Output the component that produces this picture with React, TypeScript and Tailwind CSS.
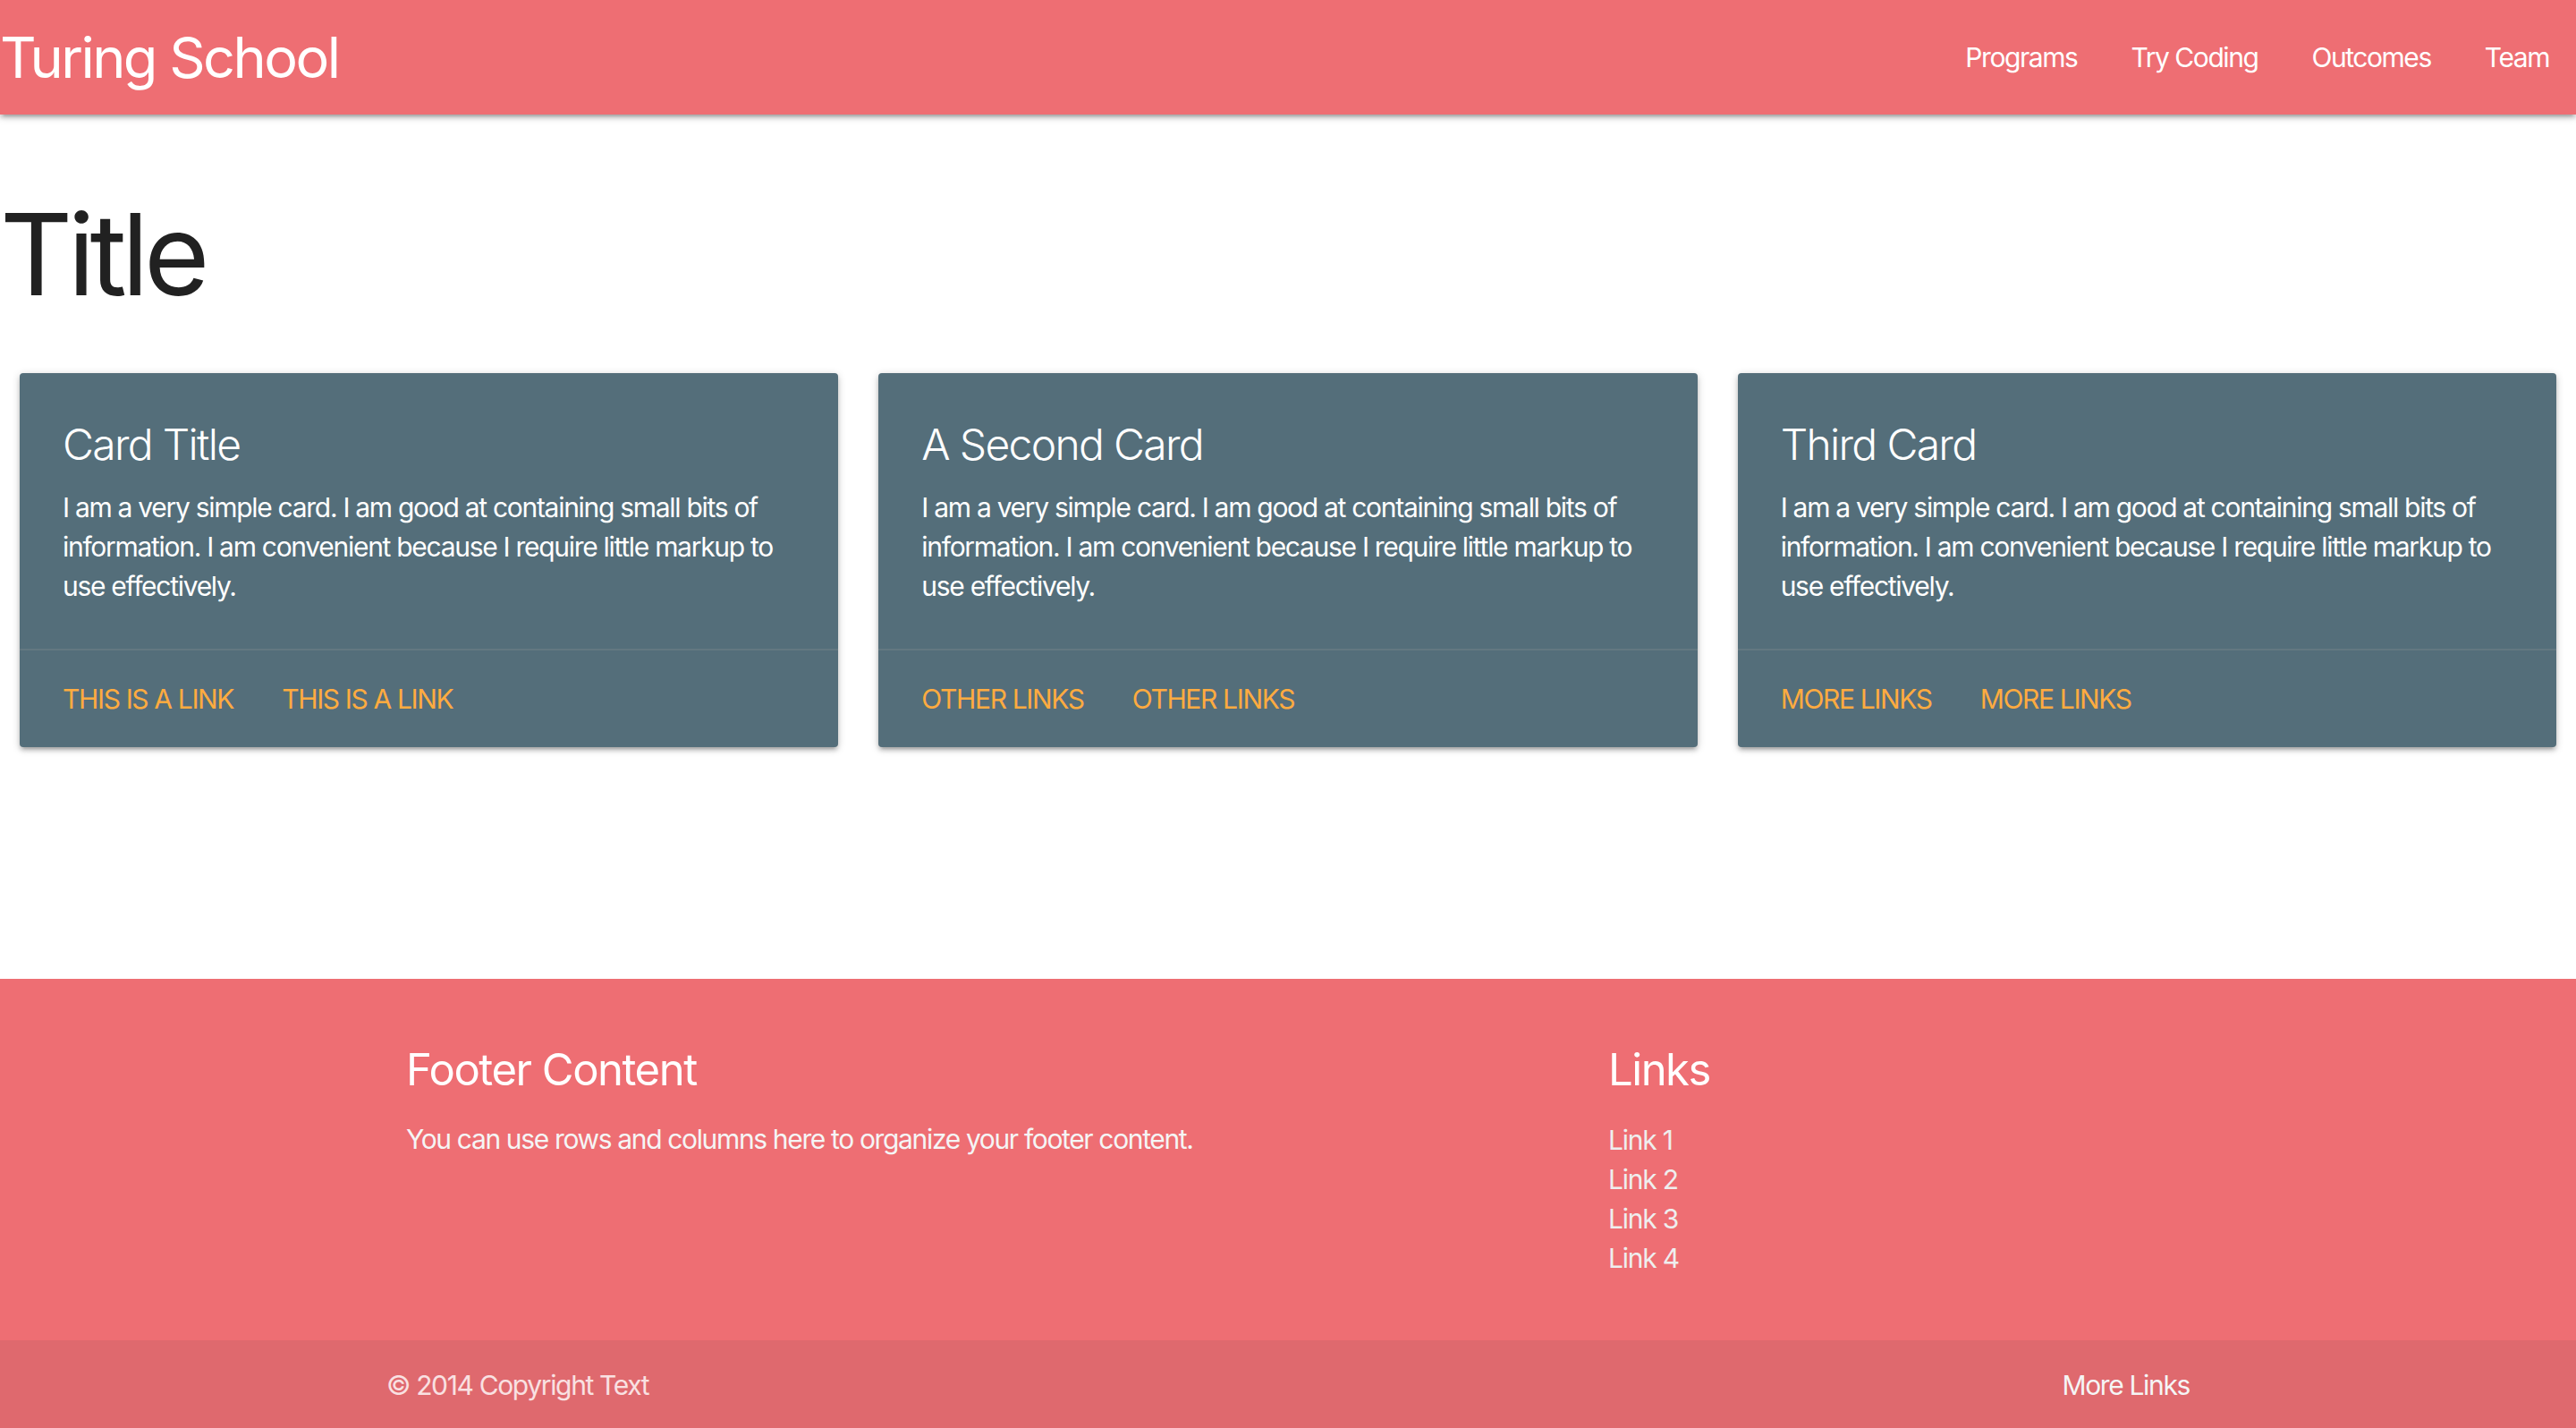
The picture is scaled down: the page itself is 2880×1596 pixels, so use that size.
const navLinks = ["Programs", "Try Coding", "Outcomes", "Team"];

const cards = [
  { title: "Card Title", link: "This is a link" },
  { title: "A Second Card", link: "Other links" },
  { title: "Third Card", link: "More links" },
];

const cardText =
  "I am a very simple card. I am good at containing small bits of information. I am convenient because I require little markup to use effectively.";

const footerLinks = ["Link 1", "Link 2", "Link 3", "Link 4"];

function Navbar() {
  return (
    <nav className="relative z-10 flex h-[128px] items-center justify-between bg-[#ee6e73] text-white shadow-[0_4px_4px_0_rgba(0,0,0,0.14),0_6px_2px_-4px_rgba(0,0,0,0.12),0_2px_10px_0_rgba(0,0,0,0.2)]">
      <a className="text-[63px] leading-[128px] tracking-[-0.04em]">Turing School</a>
      <ul className="flex">
        {navLinks.map((label) => (
          <li key={label}>
            <a className="block px-[30px] text-[30px] leading-[128px] tracking-[-0.048em]">
              {label}
            </a>
          </li>
        ))}
      </ul>
    </nav>
  );
}

function Card({ title, link }: { title: string; link: string }) {
  return (
    <div className="rounded-[4px] bg-[#546e7a] text-white shadow-[0_4px_4px_0_rgba(0,0,0,0.14),0_6px_2px_-4px_rgba(0,0,0,0.12),0_2px_10px_0_rgba(0,0,0,0.2)]">
      <div className="p-[48px]">
        <span className="mb-[16px] block text-[48px] font-light leading-[64px] tracking-[-0.035em]">
          {title}
        </span>
        <p className="text-[30px] leading-[44px] tracking-[-0.043em]">{cardText}</p>
      </div>
      <div className="flex gap-[54px] border-t-2 border-[rgba(160,160,160,0.2)] px-[48px] py-[32px]">
        <a className="text-[30px] uppercase leading-[44px] tracking-[-0.045em] text-[#ffab40]">{link}</a>
        <a className="text-[30px] uppercase leading-[44px] tracking-[-0.045em] text-[#ffab40]">{link}</a>
      </div>
    </div>
  );
}

function Footer() {
  return (
    <footer className="bg-[#ee6e73] text-white">
      <div className="mx-auto grid w-[2016px] grid-cols-12 pt-[75px] pb-[70px]">
        <div className="col-span-6 px-[22px]">
          <h5 className="text-[49px] leading-[54px] tracking-[-0.03em]">Footer Content</h5>
          <p className="mt-[28px] text-[30px] leading-[45px] tracking-[-0.045em] text-[#f5f5f5]">
            You can use rows and columns here to organize your footer content.
          </p>
        </div>
        <div className="col-span-4 col-start-9 px-[22px]">
          <h5 className="text-[49px] leading-[54px] tracking-[-0.03em]">Links</h5>
          <ul className="mt-[29px]">
            {footerLinks.map((l) => (
              <li key={l}>
                <a className="text-[30px] leading-[44px] tracking-[-0.04em] text-[#eeeeee]">{l}</a>
              </li>
            ))}
          </ul>
        </div>
      </div>
      <div className="flex h-[101px] items-center bg-[rgba(51,51,51,0.08)] text-[30px] tracking-[-0.045em]">
        <div className="mx-auto flex w-[2016px] justify-between">
          <span className="text-white/80">© 2014 Copyright Text</span>
          <a className="text-[#f5f5f5]">More Links</a>
        </div>
      </div>
    </footer>
  );
}

export default function App() {
  return (
    <div className="min-h-screen bg-white font-[Inter,'Noto_Sans',sans-serif]">
      <Navbar />
      <h1 className="mt-[87px] mb-[50px] text-[126px] leading-[139px] tracking-[-0.045em] text-[#212121]">
        Title
      </h1>
      <div className="grid grid-cols-3 gap-[45px] px-[22px] pt-[13px] pb-[259px]">
        {cards.map((c) => (
          <Card key={c.title} title={c.title} link={c.link} />
        ))}
      </div>
      <Footer />
    </div>
  );
}
